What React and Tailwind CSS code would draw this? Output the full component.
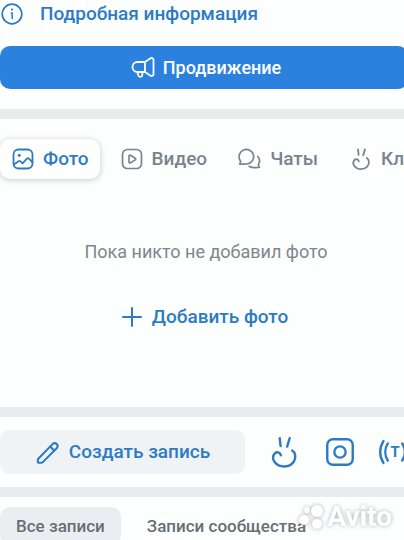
import React from 'react';

function Icon({ size = 24, stroke = 1.8, className = '', children }) {
  return (
    <svg
      width={size}
      height={size}
      viewBox="0 0 24 24"
      fill="none"
      stroke="currentColor"
      strokeWidth={stroke}
      strokeLinecap="round"
      strokeLinejoin="round"
      className={`shrink-0 ${className}`}
      aria-hidden="true"
    >
      {children}
    </svg>
  );
}

const InfoIcon = () => (
  <Icon stroke={1.7}>
    <circle cx="12" cy="12" r="9.8" />
    <path d="M11.2 11h1v5.4" strokeWidth="1.5" />
    <circle cx="12" cy="7.6" r="1.1" fill="currentColor" stroke="none" />
  </Icon>
);

const MegaphoneIcon = () => (
  <Icon>
    <path d="M14 6H6.500a5 5 0 0 0 0 10H14M14 6v10M14 6l5.600-3.700c1.300-.8 2.900 0 2.900 1.500v14.400c0 1.500-1.600 2.300-2.900 1.500L14 16" />
    <path d="M6.500 16.200l.7 3.200c.5 2 4 2 4.100-.2V16.200" />
  </Icon>
);

const PhotoIcon = () => (
  <Icon>
    <rect x="2.500" y="2.500" width="19" height="19" rx="5" />
    <path d="M3 17.500l4.600-3.300c.6-.5 1.300-.4 1.800.1l2.200 2 4.300-4.600c.6-.6 1.400-.6 2 0l3.400 3.300" />
    <circle cx="8.200" cy="8.200" r="1.500" fill="currentColor" stroke="none" />
  </Icon>
);

const VideoIcon = () => (
  <Icon stroke={1.7}>
    <rect x="2.500" y="2.500" width="19" height="19" rx="5" />
    <path d="M9 9v6c0 .9.9 1.200 1.600.8l4.600-2.900c.7-.4.7-1.300 0-1.700l-4.600-2.900C9.900 7.900 9 8.200 9 9z" />
  </Icon>
);

const ChatsIcon = () => (
  <Icon stroke={1.7}>
    <path d="M1.600 16.800c.9-.9 1.200-2.100.6-3.200A7.300 7.300 0 1 1 8.800 17c-2.400 0-4.600.3-7.200-.2z" />
    <path d="M19.800 9.500c2 2.300 2.100 5.500.7 7.900-.4.900.1 1.900.9 2.900-2.300.7-4.300.3-6 .3-1.800 0-3.200-.5-4.300-1.300" />
  </Icon>
);

const ClipsIcon = ({ size, stroke = 1.8 }) => (
  <Icon size={size} stroke={stroke}>
    <path d="M9 2.300l.6 5.500M16 2.300l-1.800 5.900" />
    <path d="M9.800 14.400c-.2-1.900-2.600-3-4.200-1.600-3.500 4.200.7 9.400 6.500 9.400 5.200 0 8.500-4 7.700-8.200-.2-1.200-.9-2.300-2-3" />
  </Icon>
);

const PlusIcon = () => (
  <Icon stroke={2}>
    <path d="M12 3v18M3 12h18" />
  </Icon>
);

const PencilIcon = () => (
  <Icon size={26} stroke={1.9}>
    <path d="M3 18.300L16.400 4.500a2.700 2.700 0 0 1 3.800 3.800L7 21.600c-.4.400-.8.400-1.200.4H3.400c-.5 0-.8-.3-.8-.8v-1.900c0-.4.1-.7.4-1z" />
    <path d="M14 7l3.700 3.700" />
  </Icon>
);

const CameraIcon = () => (
  <Icon size={34} stroke={1.7}>
    <rect x="3" y="3" width="18" height="18" rx="4" />
    <circle cx="12" cy="12" r="4" />
  </Icon>
);

const TextLiveIcon = () => (
  <Icon size={32} stroke={1.8}>
    <path d="M3.300 3.800c-3.200 5-3.200 11.400 0 16.400M6.600 5.600c-2.500 3.900-2.500 8.900 0 12.800M20.700 3.800c3.200 5 3.200 11.400 0 16.400M17.400 5.600c2.500 3.900 2.500 8.900 0 12.800" />
    <text x="12" y="16" textAnchor="middle" fontSize="11" fontWeight="700" fill="currentColor" stroke="none">T</text>
  </Icon>
);

const tabs = [
  { label: 'Фото', icon: <PhotoIcon />, active: true },
  { label: 'Видео', icon: <VideoIcon /> },
  { label: 'Чаты', icon: <ChatsIcon /> },
  { label: 'Кл', icon: <ClipsIcon size={24} /> },
];

function Divider() {
  return <div className="h-[10px] bg-[#e9ebef]" />;
}

function Watermark() {
  return (
    <div className="absolute right-3 top-1 flex items-center text-white drop-shadow-[0_0_2px_rgba(90,95,105,0.5)]">
      <svg width="28" height="28" viewBox="0 0 28 28" fill="currentColor" aria-hidden="true">
        <circle cx="8" cy="7" r="3" />
        <circle cx="18" cy="8" r="6" />
        <circle cx="5" cy="17" r="5" />
        <circle cx="18" cy="21" r="5" />
      </svg>
      <span className="text-[28px] leading-8 font-bold">Avito</span>
    </div>
  );
}

export default function App() {
  return (
    <main className="overflow-hidden bg-[#fdfefe] font-[Roboto,sans-serif] text-[19px] leading-6 font-medium text-[#2d7bc4]">
      <a href="#info" className="flex items-center gap-4 pt-[2px]">
        <InfoIcon />
        Подробная информация
      </a>

      <div className="mt-5 mb-5 -mr-1">
        <button className="flex h-[43px] w-full items-center justify-center gap-2 rounded-[10px] bg-[#2b81dd] pl-1 text-[18px] text-white">
          <MegaphoneIcon />
          Продвижение
        </button>
      </div>

      <Divider />

      <section className="h-[288px] pt-5">
        <div className="flex gap-[9px] whitespace-nowrap text-[#7b838c]">
          {tabs.map((tab) => (
            <button
              key={tab.label}
              className={`flex h-10 shrink-0 items-center gap-2 rounded-[10px] px-[11px] ${
                tab.active ? 'bg-white text-[#2d7bc4] shadow-[0_1px_6px_rgba(0,0,0,0.22)]' : ''
              }`}
            >
              {tab.icon}
              {tab.label}
            </button>
          ))}
        </div>
        <p className="mt-[61px] pl-2 text-center text-[18px] font-normal text-[#80868c]">Пока никто не добавил фото</p>
        <button className="mx-auto mt-[41px] flex items-center gap-2 pl-1">
          <PlusIcon />
          Добавить фото
        </button>
      </section>

      <Divider />

      <div className="flex items-center gap-[22px] py-[13px]">
        <button className="flex h-[44px] w-[245px] shrink-0 items-center justify-center gap-2 rounded-[10px] bg-[#f0f3f6]">
          <PencilIcon />
          Создать запись
        </button>
        <button aria-label="Клип"><ClipsIcon size={34} stroke={1.7} /></button>
        <button aria-label="История"><CameraIcon /></button>
        <button aria-label="Текст"><TextLiveIcon /></button>
      </div>

      <Divider />

      <div className="relative h-[43px] overflow-hidden pt-[10px]">
        <div className="flex gap-[10px] text-[17px] whitespace-nowrap text-[#686e75]">
          <button className="h-[38px] rounded-[10px] bg-[#ebeef1] px-4">Все записи</button>
          <button className="h-[38px] px-4">Записи сообщества</button>
        </div>
        <Watermark />
      </div>
    </main>
  );
}
